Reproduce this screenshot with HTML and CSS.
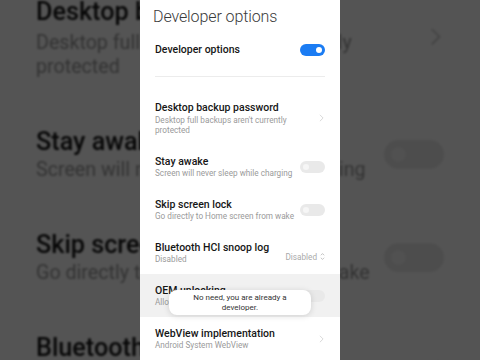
FILE: index.html
```html
<!DOCTYPE html>
<html lang="en">
<head>
<meta charset="utf-8">
<title>Developer options</title>
<link rel="stylesheet" href="styles.css">
</head>
<body>
<div class="stage">
  <div class="backdrop" aria-hidden="true">
    <div class="screen zoomed">
      <h1 class="title">Developer options</h1>
      <div class="row single"><div class="text"><div class="name">Developer options</div></div><span class="toggle on"></span></div>
      <div class="divider"></div>
      <div class="row tall"><div class="text"><div class="name">Desktop backup password</div><div class="sub">Desktop full backups aren't currently protected</div></div><svg class="chev" viewBox="0 0 6 10"><path d="M1 1l4 4-4 4"/></svg></div>
      <div class="row"><div class="text"><div class="name">Stay awake</div><div class="sub">Screen will never sleep while charging</div></div><span class="toggle"></span></div>
      <div class="row"><div class="text"><div class="name">Skip screen lock</div><div class="sub">Go directly to Home screen from wake</div></div><span class="toggle"></span></div>
      <div class="row"><div class="text"><div class="name">Bluetooth HCI snoop log</div><div class="sub">Disabled</div></div><span class="value">Disabled <svg class="updown" viewBox="0 0 6 10"><path d="M1 3.5l2-2 2 2M1 6.5l2 2 2-2"/></svg></span></div>
    </div>
  </div>

  <div class="screen phone">
    <h1 class="title">Developer options</h1>
    <div class="row single"><div class="text"><div class="name">Developer options</div></div><span class="toggle on"></span></div>
    <div class="divider"></div>
    <div class="row tall"><div class="text"><div class="name">Desktop backup password</div><div class="sub">Desktop full backups aren't currently protected</div></div><svg class="chev" viewBox="0 0 6 10"><path d="M1 1l4 4-4 4"/></svg></div>
    <div class="row"><div class="text"><div class="name">Stay awake</div><div class="sub">Screen will never sleep while charging</div></div><span class="toggle"></span></div>
    <div class="row"><div class="text"><div class="name">Skip screen lock</div><div class="sub">Go directly to Home screen from wake</div></div><span class="toggle"></span></div>
    <div class="row"><div class="text"><div class="name">Bluetooth HCI snoop log</div><div class="sub">Disabled</div></div><span class="value">Disabled <svg class="updown" viewBox="0 0 6 10"><path d="M1 3.5l2-2 2 2M1 6.5l2 2 2-2"/></svg></span></div>
    <div class="row pressed"><div class="text"><div class="name">OEM unlocking</div><div class="sub">Allow the bootloader to be unlocked</div></div><span class="toggle"></span>
      <div class="toast">No need, you are already a developer.</div>
    </div>
    <div class="row"><div class="text"><div class="name">WebView implementation</div><div class="sub">Android System WebView</div></div><svg class="chev" viewBox="0 0 6 10"><path d="M1 1l4 4-4 4"/></svg></div>
  </div>
</div>
</body>
</html>
```

FILE: styles.css
```css
* { box-sizing: border-box; }
html, body { margin: 0; padding: 0; background: #545454; }
body { font-family: Roboto, "Noto Sans", "Liberation Sans", sans-serif; }

.stage {
  width: 480px;
  height: 360px;
  overflow: hidden;
  display: grid;
  justify-items: center;
  background: #545454;
}
.backdrop, .phone { grid-area: 1 / 1; }

.backdrop {
  width: 200px;
  height: 360px;
  filter: brightness(0.33) blur(0.9px);
}
.zoomed {
  transform: scale(2.4);
  transform-origin: 100px 176px;
}
.phone {
  position: relative;
  z-index: 1;
}

.screen {
  width: 200px;
  height: 360px;
  background: #fff;
  display: flex;
  flex-direction: column;
  overflow: hidden;
}

.title {
  margin: 0;
  padding: 7px 13px 0;
  height: 34px;
  flex: none;
  font-size: 16px;
  line-height: 20px;
  font-weight: 300;
  color: #3a3a3a;
  letter-spacing: -0.1px;
}

.row {
  position: relative;
  flex: none;
  display: flex;
  align-items: center;
  justify-content: space-between;
  gap: 4px;
  height: 43px;
  padding: 0 15px;
}
.row.single { height: 32px; }
.row.tall { height: 54px; margin-top: 14px; }
.row.pressed { background: #f1f1f1; }

.text { min-width: 0; flex: 1; }
.name {
  font-size: 10.5px;
  line-height: 14px;
  font-weight: 500;
  color: #161616;
  white-space: nowrap;
}
.sub {
  font-size: 8.2px;
  line-height: 10px;
  color: #9a9a9a;
  white-space: nowrap;
  margin-top: -1px;
}
.row.tall .sub { max-width: 140px; white-space: normal; margin-top: 0; }

.divider {
  flex: none;
  height: 1px;
  background: #ececec;
  margin: 10px 15px 0;
}

.toggle {
  flex: none;
  width: 25px;
  height: 12px;
  border-radius: 6px;
  background: #e9e9e9;
  position: relative;
}
.toggle::after {
  content: "";
  position: absolute;
  left: 3px;
  top: 3px;
  width: 6px;
  height: 6px;
  border-radius: 50%;
  background: #f6f6f6;
}
.toggle.on { background: #1b7cf3; }
.toggle.on::after { left: auto; right: 3px; background: #fff; }

.chev {
  flex: none;
  width: 5px;
  height: 8px;
  margin-right: 1px;
  fill: none;
  stroke: #cfcfcf;
  stroke-width: 1;
}

.value {
  flex: none;
  display: flex;
  align-items: center;
  gap: 3px;
  font-size: 8.2px;
  color: #aaa;
  margin-top: 8px;
}
.updown {
  width: 5px;
  height: 9px;
  fill: none;
  stroke: #b0b0b0;
  stroke-width: 0.9;
}

.toast {
  position: absolute;
  left: 29px;
  top: 16px;
  width: 142px;
  height: 25px;
  padding: 3px 20px 0;
  background: #fff;
  border-radius: 8px;
  box-shadow: 0 1px 6px rgba(0,0,0,0.14);
  font-size: 8px;
  line-height: 9.5px;
  color: #333;
  text-align: center;
}
```
